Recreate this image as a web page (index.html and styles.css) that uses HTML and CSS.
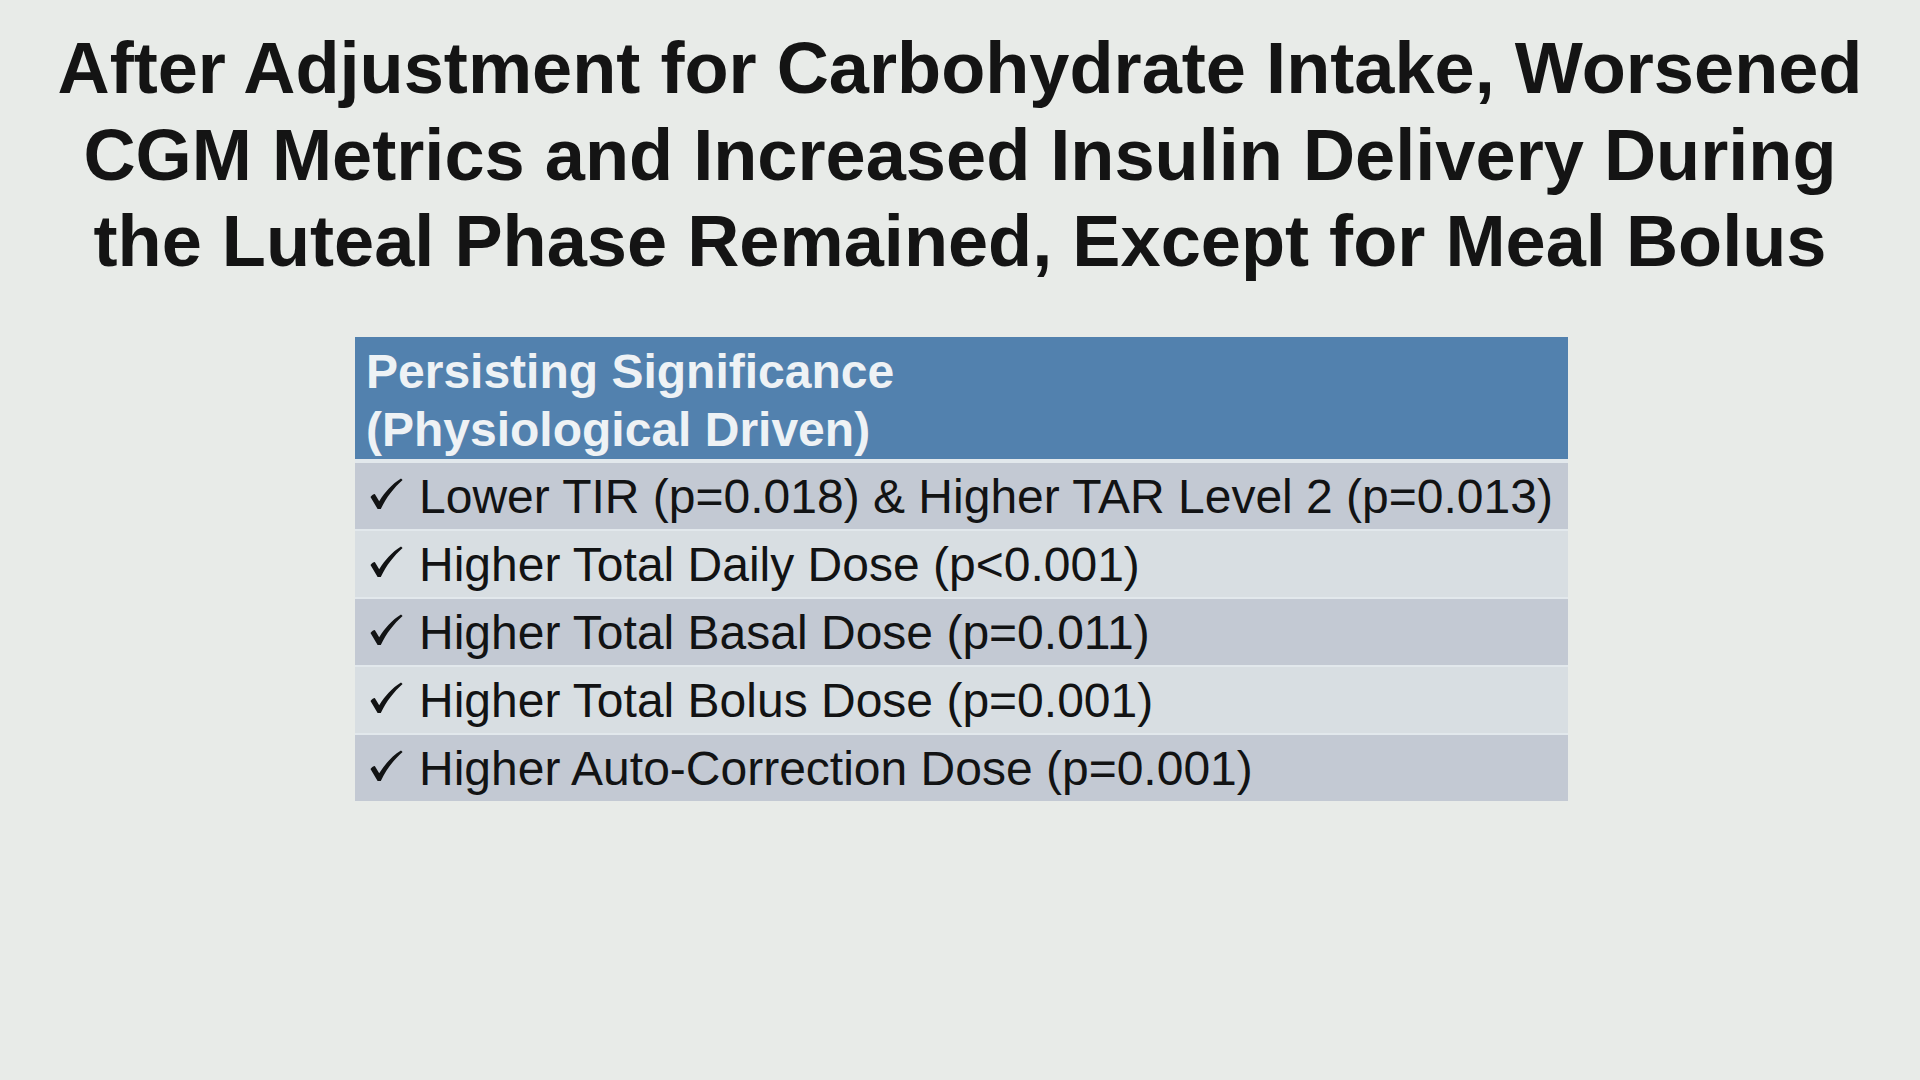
FILE: index.html
```html
<!DOCTYPE html>
<html lang="en">
<head>
<meta charset="utf-8">
<title>Persisting Significance</title>
<link rel="stylesheet" href="styles.css">
</head>
<body>
<main class="slide">
  <h1 class="title">After Adjustment for Carbohydrate Intake, Worsened<br>CGM Metrics and Increased Insulin Delivery During<br>the Luteal Phase Remained, Except for Meal Bolus</h1>
  <section class="table">
    <div class="head">Persisting Significance<br>(Physiological Driven)</div>
    <div class="row odd"><svg class="check" viewBox="0 0 33 31"><path d="M0.5,19 C2,17 3.5,16 4.8,16 L9.2,23.2 C15,14 22,6 31,0.5 L32.6,1.9 C24,9.5 16.5,19 10.8,31 L7.6,31 Z"/></svg><span>Lower TIR (p=0.018) &amp; Higher TAR Level 2 (p=0.013)</span></div>
    <div class="row even"><svg class="check" viewBox="0 0 33 31"><path d="M0.5,19 C2,17 3.5,16 4.8,16 L9.2,23.2 C15,14 22,6 31,0.5 L32.6,1.9 C24,9.5 16.5,19 10.8,31 L7.6,31 Z"/></svg><span>Higher Total Daily Dose (p&lt;0.001)</span></div>
    <div class="row odd"><svg class="check" viewBox="0 0 33 31"><path d="M0.5,19 C2,17 3.5,16 4.8,16 L9.2,23.2 C15,14 22,6 31,0.5 L32.6,1.9 C24,9.5 16.5,19 10.8,31 L7.6,31 Z"/></svg><span>Higher Total Basal Dose (p=0.011)</span></div>
    <div class="row even"><svg class="check" viewBox="0 0 33 31"><path d="M0.5,19 C2,17 3.5,16 4.8,16 L9.2,23.2 C15,14 22,6 31,0.5 L32.6,1.9 C24,9.5 16.5,19 10.8,31 L7.6,31 Z"/></svg><span>Higher Total Bolus Dose (p=0.001)</span></div>
    <div class="row odd"><svg class="check" viewBox="0 0 33 31"><path d="M0.5,19 C2,17 3.5,16 4.8,16 L9.2,23.2 C15,14 22,6 31,0.5 L32.6,1.9 C24,9.5 16.5,19 10.8,31 L7.6,31 Z"/></svg><span>Higher Auto-Correction Dose (p=0.001)</span></div>
  </section>
</main>
</body>
</html>
```
FILE: styles.css
```css
html, body {
  margin: 0;
  padding: 0;
}
body {
  background: #e8ebe8;
  font-family: "Liberation Sans", Arial, sans-serif;
  width: 1920px;
  height: 1080px;
  overflow: hidden;
}
.slide {
  display: flex;
  flex-direction: column;
  align-items: center;
  padding-top: 25px;
}
.title {
  margin: 0;
  font-size: 72.2px;
  font-weight: bold;
  line-height: 86.7px;
  text-align: center;
  color: #141414;
}
.table {
  margin-top: 52px;
  margin-left: 3px;
  width: 1213px;
  display: flex;
  flex-direction: column;
  gap: 2px;
  background: #e2e8ec;
}
.head {
  background: #5281ae;
  color: #eef2f5;
  font-weight: bold;
  font-size: 48px;
  line-height: 57.6px;
  padding: 6px 11px 1px;
  margin-bottom: 2px;
}
.row {
  height: 66px;
  display: flex;
  align-items: center;
  padding-left: 15px;
  font-size: 48px;
  color: #121314;
}
.row.odd { background: #c3c9d3; }
.row.even { background: #d8dee2; }
.check {
  width: 33px;
  height: 31px;
  margin-right: 16px;
  margin-top: -6px;
  fill: #121314;
  flex: none;
}
```
